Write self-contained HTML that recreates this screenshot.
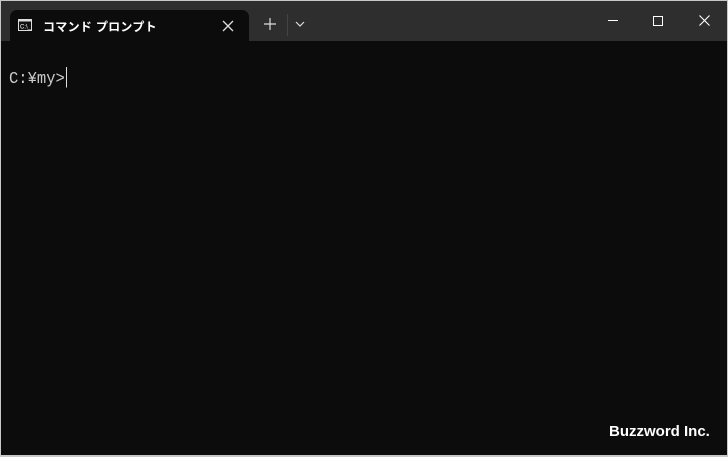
<!DOCTYPE html>
<html><head><meta charset="utf-8"><style>
*{margin:0;padding:0;box-sizing:border-box}
body{width:728px;height:457px;background:#c8c8c8;overflow:hidden;font-family:"Liberation Sans","Noto Sans CJK JP",sans-serif}
.win{position:absolute;left:1px;top:1px;width:726px;height:454px;background:#0c0c0c}
.bar{position:absolute;left:0;top:0;width:726px;height:40px;background:#2e2e2e}
.tab{position:absolute;left:9px;top:9px;width:239px;height:31px;background:#0c0c0c;border-radius:7px 7px 0 0}
.t{position:absolute;color:#fff;font-size:12px;font-weight:bold;left:33px;top:8px;letter-spacing:0.3px;white-space:nowrap}
.term{position:absolute;left:8px;top:66px;color:#ccc;font-family:"Liberation Mono","Noto Sans CJK JP",monospace;font-size:15.5px;white-space:nowrap;transform:scaleY(1.08);transform-origin:0 0}
.cur{display:inline-block;width:1px;height:19px;background:#ddd;vertical-align:-4px;margin-left:1px}
.brand{position:absolute;left:608px;top:422px;color:#fff;font-size:15px;font-weight:bold;font-family:"Liberation Sans",sans-serif;white-space:nowrap}
</style></head><body>
<div class="win">
<div class="bar"></div>
<div class="tab">
<svg style="position:absolute;left:8px;top:9px" width="14" height="12"><rect x="0.5" y="0.5" width="13" height="11" fill="#111" stroke="#ddd"/><rect x="0.5" y="0.5" width="13" height="2" fill="#ddd"/><text x="2" y="9.5" font-size="6" fill="#fff" font-family="Liberation Sans">C:\_</text></svg>
<div class="t">コマンド プロンプト</div>
<svg style="position:absolute;left:212px;top:10px" width="12" height="12"><path d="M1 1L11 11M11 1L1 11" stroke="#ddd" stroke-width="1.3"/></svg>
</div>
<svg style="position:absolute;left:263px;top:17px" width="12" height="12"><path d="M6 0V12M0 6H12" stroke="#ddd" stroke-width="1.2"/></svg>
<div style="position:absolute;left:286px;top:13px;width:1px;height:22px;background:#444"></div>
<svg style="position:absolute;left:294px;top:20px" width="10" height="6"><path d="M1 1L5 5L9 1" stroke="#ddd" stroke-width="1.2" fill="none"/></svg>
<div style="position:absolute;left:607px;top:19px;width:10px;height:1px;background:#fff"></div>
<div style="position:absolute;left:652px;top:15px;width:10px;height:10px;border:1px solid #fff"></div>
<svg style="position:absolute;left:698px;top:14px" width="11" height="11"><path d="M0.5 0.5L10.5 10.5M10.5 0.5L0.5 10.5" stroke="#fff" stroke-width="1.1"/></svg>
<div class="term">C:¥my&gt;<span class="cur"></span></div>
<div class="brand">Buzzword Inc.</div>
</div>
</body></html>
